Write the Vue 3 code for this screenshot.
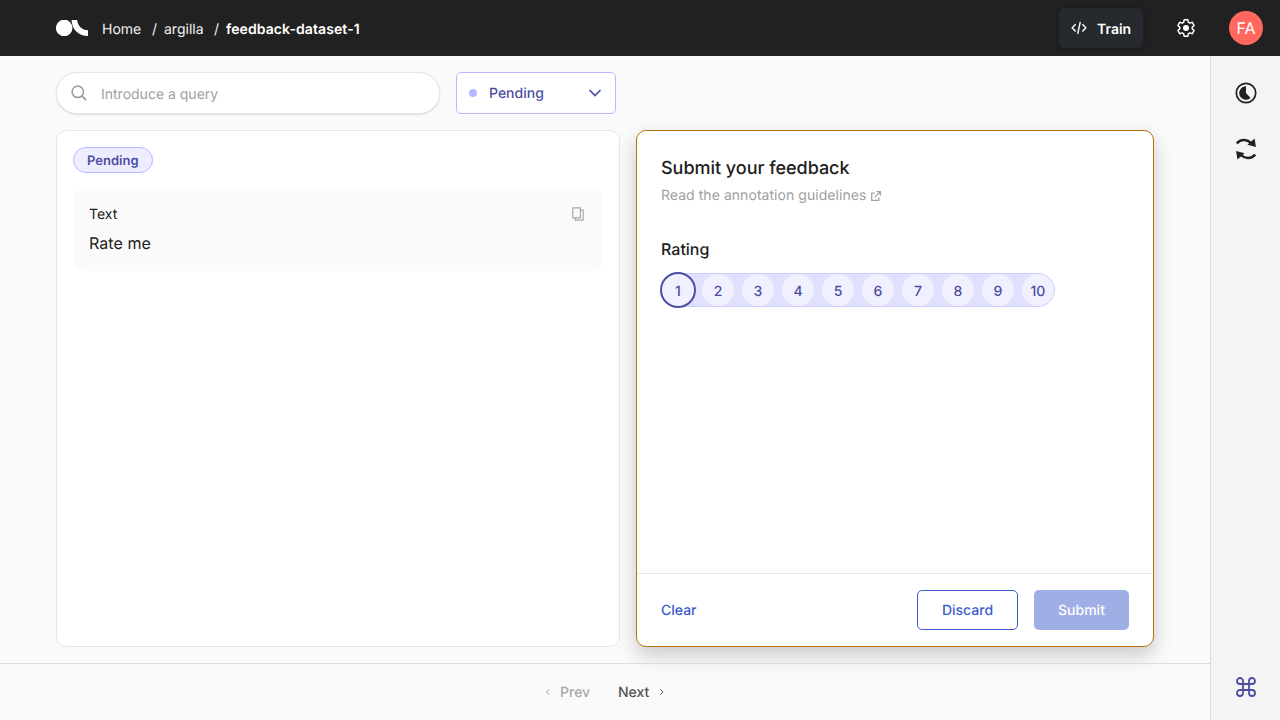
<script setup>
const ratings = [1, 2, 3, 4, 5, 6, 7, 8, 9, 10]
const selected = 1
</script>

<template>
  <div class="app">
    <header class="topbar">
      <svg class="logo" width="32" height="16" viewBox="0 0 32 16" fill="#fff">
        <circle cx="8.2" cy="8" r="8.3" />
        <path d="M15.500 0H21.200C21.600 5.500 26 10.300 32 10.300V16C23 16 16 10 15.500 0Z" />
      </svg>
      <nav class="crumbs">
        <span class="crumb home">Home</span>
        <span class="slash">/</span>
        <span class="crumb workspace">argilla</span>
        <span class="slash">/</span>
        <span class="crumb current">feedback-dataset-1</span>
      </nav>
      <button class="train">
        <svg width="16" height="14" viewBox="0 0 16 14" fill="none" stroke="#fff" stroke-width="1.4">
          <path d="M4.600 3.200L1.200 6.800L4.600 10.400M11.400 3.200L14.800 6.800L11.400 10.400M9.300 .8L6.700 12.800" />
        </svg>
        <span>Train</span>
      </button>
      <svg class="gear" width="20" height="20" viewBox="0 0 20 20" fill="none" stroke="#fff" stroke-width="1.5" stroke-linejoin="round">
        <path d="M8.200 1.700H11.800L12.400 4.300L13.800 5.100L16.300 4.300L18.100 7.500L16.200 9.200V10.800L18.100 12.500L16.300 15.700L13.800 14.900L12.400 15.700L11.800 18.300H8.200L7.600 15.700L6.200 14.900L3.700 15.700L1.900 12.500L3.800 10.800V9.200L1.900 7.500L3.700 4.300L6.200 5.100L7.600 4.300Z" />
        <circle cx="10" cy="10" r="3" fill="#fff" stroke="none" />
      </svg>
      <div class="avatar">FA</div>
    </header>

    <div class="body">
      <main class="main">
        <div class="filters">
          <div class="search">
            <svg width="16" height="16" viewBox="0 0 16 16" fill="none" stroke="#9b9b9b" stroke-width="1.6">
              <circle cx="6.800" cy="6.800" r="5.700" />
              <path d="M10.900 10.900L15.100 15.100" />
            </svg>
            <span>Introduce a query</span>
          </div>
          <div class="status">
            <i class="dot"></i>
            <span>Pending</span>
            <svg width="14" height="10" viewBox="0 0 14 10" fill="none" stroke="#4c4ea3" stroke-width="1.7">
              <path d="M1.500 2L7 7.500L12.500 2" />
            </svg>
          </div>
        </div>

        <div class="panels">
          <section class="record">
            <span class="badge">Pending</span>
            <div class="field">
              <div class="field-head">
                <span>Text</span>
                <svg width="12" height="14" viewBox="0 0 12 14" fill="none" stroke="#a8a8a8" stroke-width="1.2">
                  <path d="M.8 .8H8.400V10.800H.8ZM8.700 3.200H11.200V13.200H3.400V11" />
                </svg>
              </div>
              <p>Rate me</p>
            </div>
          </section>

          <section class="feedback">
            <div class="questions">
              <h1>Submit your feedback</h1>
              <a class="guide">
                <span>Read the annotation guidelines</span>
                <svg width="10" height="10" viewBox="0 0 10 10" fill="none" stroke="#a0a0a0" stroke-width="1.3">
                  <path d="M3.800 2.200H.7V9.300H7.800V6.200M5.400 .7H9.300V4.600M9.100 .9L3.800 6.200" />
                </svg>
              </a>
              <h2>Rating</h2>
              <div class="rating">
                <span v-for="n in ratings" :key="n" class="rate" :class="{ focused: n === selected }">{{ n }}</span>
              </div>
            </div>
            <footer class="actions">
              <span class="clear">Clear</span>
              <button class="discard">Discard</button>
              <button class="submit">Submit</button>
            </footer>
          </section>
        </div>

        <div class="pager">
          <span class="prev">
            <svg width="5" height="8" viewBox="0 0 5 8" fill="none" stroke="#a5a5a5" stroke-width="1"><path d="M4.200 1.200L1.400 4L4.200 6.800" /></svg>
            <span>Prev</span>
          </span>
          <span class="next">
            <span>Next</span>
            <svg width="5" height="8" viewBox="0 0 5 8" fill="none" stroke="#555" stroke-width="1"><path d="M1.200 1.200L4 4L1.200 6.800" /></svg>
          </span>
        </div>
      </main>

      <aside class="side">
        <svg class="progress" width="22" height="22" viewBox="0 0 22 22">
          <circle cx="11" cy="11" r="9.700" fill="none" stroke="#212121" stroke-width="1.700" />
          <path d="M11 4.300V11L15.500 15.900A6.700 6.700 0 1 1 11 4.300Z" fill="#212121" />
        </svg>
        <svg class="refresh" width="22" height="22" viewBox="0 0 22 22">
          <g fill="none" stroke="#212121" stroke-width="2.500">
            <path d="M1.800 5.300C5.500 1.100 11.500 .7 16 4.800" />
            <path d="M20.200 16.700C16.500 20.900 10.500 21.300 6 17.200" />
          </g>
          <path d="M19.600 .6L20.900 9L12.400 6.800ZM2.400 21.400L1.100 13L9.600 15.200Z" fill="#212121" />
        </svg>
        <svg class="command" width="20" height="20" viewBox="0 0 20 20" fill="none" stroke="#4c4ea3" stroke-width="1.800">
          <path d="M7 7V4A3 3 0 1 0 4 7H16A3 3 0 1 0 13 4V16A3 3 0 1 0 16 13H4A3 3 0 1 0 7 16Z" />
        </svg>
      </aside>
    </div>
  </div>
</template>

<style>
body { margin: 0; background: #fafafa; }
</style>

<style scoped>
* { box-sizing: border-box; }
.app {
  display: flex;
  flex-direction: column;
  width: 1280px;
  height: 720px;
  overflow: hidden;
  font-family: Inter, "Liberation Sans", sans-serif;
  font-size: 14px;
  line-height: 20px;
  color: #212121;
  background: #fafafa;
  text-rendering: geometricPrecision;
}
button { font: inherit; letter-spacing: inherit; text-rendering: inherit; border: 0; margin: 0; padding: 0; }
svg { display: block; flex: none; }
.topbar {
  display: flex;
  align-items: center;
  flex: none;
  height: 56px;
  padding: 0 17px 0 56px;
  color: #fff;
  background: #212121;
}
.crumbs { display: flex; margin: 4px 0 0 14px; white-space: nowrap; }
.home { width: 50px; }
.slash { width: 12px; }
.workspace { width: 50px; }
.home, .workspace, .slash { color: #f2f2f2; }
.current { font-weight: 600; letter-spacing: .09px; }
.train {
  display: flex;
  align-items: center;
  gap: 10px;
  width: 84px;
  height: 40px;
  margin-left: auto;
  padding-left: 12px;
  border-radius: 5px;
  color: #fff;
  font-weight: 600;
  background: #262a2e;
  box-shadow: 0 1px 4px rgba(0, 0, 0, .25);
}
.train span { padding-top: 4px; }
.gear { margin-left: 33px; }
.avatar {
  width: 34px;
  height: 34px;
  margin-left: 33px;
  border-radius: 50%;
  font-size: 16px;
  line-height: 35px;
  text-align: center;
  background: #ff675f;
}
.body { display: flex; flex: 1; min-height: 0; }
.main { display: flex; flex-direction: column; width: 1210px; }
.filters { display: flex; gap: 16px; padding: 16px 56px; }
.search {
  display: flex;
  align-items: center;
  gap: 14px;
  width: 384px;
  height: 42px;
  padding-left: 14px;
  border: 1px solid #e6e6e6;
  border-radius: 21px;
  color: #a0a0a0;
  background: #fff;
  box-shadow: 0 1px 2px rgba(0, 0, 0, .12);
}
.search span { padding-top: 4px; }
.status {
  display: flex;
  align-items: center;
  width: 160px;
  height: 42px;
  padding: 0 13px 0 12px;
  border: 1px solid #b6b9ff;
  border-radius: 5px;
  color: #4c4ea3;
  font-weight: 500;
  background: #fff;
}
.status span { padding-top: 2px; }
.status svg { margin-left: auto; }
.dot { width: 8px; height: 8px; margin-right: 12px; border-radius: 50%; background: #b6b9ff; }
.panels { display: flex; gap: 16px; flex: 1; padding: 0 56px 16px; }
.record {
  width: 564px;
  padding: 16px;
  border: 1px solid #e6e6e6;
  border-radius: 10px;
  background: #fff;
}
.badge {
  display: block;
  width: 79.5px;
  height: 26px;
  border: 1px solid #b6b9ff;
  border-radius: 13px;
  color: #4c4ea3;
  font-size: 13px;
  line-height: 27px;
  font-weight: 600;
  text-align: center;
  background: #eeedff;
}
.field { height: 82px; margin-top: 16px; padding: 14px 19px 0 16px; border-radius: 10px; background: #fafafa; }
.field-head { display: flex; justify-content: space-between; align-items: center; }
.field-head span { padding-top: 2px; }
.field p { margin: 7px 0 0; font-size: 16px; line-height: 22px; letter-spacing: .08px; }
.feedback {
  display: flex;
  flex-direction: column;
  width: 518px;
  border: 1px solid #bb720a;
  border-radius: 10px;
  background: #fff;
  box-shadow: 0 8px 20px rgba(0, 0, 0, .2);
}
.questions { flex: 1; padding: 26px 24px 0; }
h1 { margin: 0; font-size: 18px; line-height: 24px; font-weight: 500; letter-spacing: -.03px; }
.guide { display: flex; align-items: center; gap: 5px; margin-top: 5px; color: #a0a0a0; letter-spacing: .05px; }
h2 { margin: 32px 0 0; font-size: 16px; line-height: 22px; font-weight: 500; }
.rating {
  display: flex;
  gap: 8px;
  width: 394px;
  height: 34px;
  margin-top: 13px;
  border: 1px solid #cdcdff;
  border-radius: 17px;
  background: #e0e0ff;
}
.rate {
  flex: none;
  width: 32px;
  height: 32px;
  border-radius: 50%;
  color: #4c4ea3;
  line-height: 36px;
  font-weight: 500;
  text-align: center;
  background: #f1f0ff;
}
.focused { box-shadow: 0 0 0 2px #4c4ea3; }
.actions {
  display: flex;
  align-items: center;
  gap: 16px;
  height: 73px;
  padding: 0 24px;
  border-top: 1px solid #e6e6e6;
  color: #3e5cc9;
  font-weight: 500;
}
.clear { margin-right: auto; padding-top: 2px; }
.discard, .submit { height: 40px; padding-top: 2px; border-radius: 5px; }
.discard { width: 101px; border: 1px solid #3e5cc9; color: #3e5cc9; background: #fff; }
.submit { width: 95px; color: #fff; background: #9faee4; }
.pager { display: flex; height: 57px; padding: 18px 0 0 545px; border-top: 1px solid #dcdcdc; font-weight: 500; }
.prev, .next { display: flex; align-items: center; height: 20px; }
.pager span span { padding-top: 2px; }
.prev { gap: 10px; width: 73px; color: #a9a9a9; }
.next { gap: 10px; color: #555; }
.side {
  display: flex;
  flex-direction: column;
  align-items: center;
  width: 70px;
  padding: 26px 0 23px;
  border-left: 1px solid #d9d9d9;
  background: #f4f4f4;
}
.refresh { margin-top: 34px; }
.command { margin-top: auto; }
</style>
